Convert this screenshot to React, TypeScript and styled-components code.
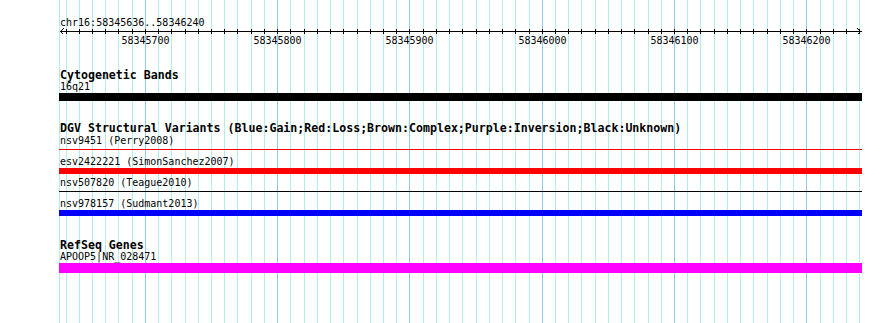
import styled, { createGlobalStyle } from "styled-components"

const START = 58345636
const END = 58346240
const FIRST_TICK = 58345640
const MINOR = "#b2ecf0"
const MAJOR = "#8ecbea"
const PANEL_LEFT = 59
const PANEL_WIDTH = 803

// pixel column of every 10bp grid line
const ticks = Array.from({ length: 61 }, (_, k) => ({
    bp: FIRST_TICK + k * 10,
    x: Math.round(65.5 + 13.2286 * k),
}))

const gridLines = [{ x: PANEL_LEFT, major: false }, ...ticks.map(t => ({ x: t.x, major: t.bp % 100 === 0 }))]

const gridBackground = (() => {
    const stops: string[] = []
    let prev = 0
    for (const l of gridLines) {
        stops.push(`transparent ${prev}px ${l.x}px`)
        stops.push(`${l.major ? MAJOR : MINOR} ${l.x}px ${l.x + 1}px`)
        prev = l.x + 1
    }
    stops.push(`transparent ${prev}px`)
    return `linear-gradient(to right, ${stops.join(", ")})`
})()

const GlobalStyle = createGlobalStyle`
    html, body {
        margin: 0;
        padding: 0;
        background: #ffffff;
    }
    body {
        font-family: "DejaVu Sans Mono", "Liberation Mono", monospace;
        font-size: 10px;
        color: #000000;
    }
`

const Page = styled.div`
    width: 890px;
    height: 323px;
    overflow: hidden;
    box-sizing: border-box;
    padding: 17px 0 0 ${PANEL_LEFT}px;
    background: ${gridBackground};
    display: flex;
    flex-direction: column;
`

const Panel = styled.div`
    width: ${PANEL_WIDTH}px;
    display: flex;
    flex-direction: column;
`

const CoordLabel = styled.div`
    line-height: 11px;
    height: 11px;
    padding-left: 1px;
    white-space: pre;
`

const RulerSvg = styled.svg`
    display: block;
    width: ${PANEL_WIDTH}px;
    height: 19px;
    text {
        font-family: "DejaVu Sans Mono", "Liberation Mono", monospace;
        font-size: 10px;
        fill: #000000;
    }
`

const Track = styled.section<{ $gap: number }>`
    margin-top: ${p => p.$gap}px;
    display: flex;
    flex-direction: column;
`

const TrackTitle = styled.div`
    font-weight: bold;
    font-size: 11.6px;
    line-height: 12px;
    height: 12px;
    padding-left: 1px;
    white-space: pre;
`

const FeatureList = styled.div<{ $pad: number }>`
    display: flex;
    flex-direction: column;
    gap: 3px;
    padding-top: ${p => p.$pad}px;
`

const Feature = styled.div`
    display: flex;
    flex-direction: column;
`

const FeatureLabel = styled.div`
    line-height: 11px;
    height: 11px;
    padding-left: 1px;
    white-space: pre;
`

const Glyph = styled.div<{ $color: string; $kind: "bar" | "line"; $h: number }>`
    height: ${p => p.$h}px;
    margin-top: 1px;
    background: ${p =>
        p.$kind === "bar"
            ? p.$color
            : `linear-gradient(${p.$color}, ${p.$color}) 0 2px / 100% 1px no-repeat`};
`

const toSvg = (x: number) => x - PANEL_LEFT + 0.5

function Ruler() {
    return (
        <RulerSvg viewBox={`0 0 ${PANEL_WIDTH} 19`} shapeRendering="crispEdges">
            <line x1={1} y1={3.5} x2={PANEL_WIDTH} y2={3.5} stroke="#000" />
            <polyline points="4.5,0.5 1.5,3.5 4.5,6.5" fill="none" stroke="#000" />
            <polyline points={`${PANEL_WIDTH - 4.5},0.5 ${PANEL_WIDTH - 1.5},3.5 ${PANEL_WIDTH - 4.5},6.5`} fill="none" stroke="#000" />
            {ticks.map(t => (
                <line key={t.bp} x1={toSvg(t.x)} y1={1} x2={toSvg(t.x)} y2={6} stroke="#000" />
            ))}
            {ticks.filter(t => t.bp % 100 === 0).map(t => (
                <text key={t.bp} x={toSvg(t.x)} y={16} textAnchor="middle">{t.bp}</text>
            ))}
        </RulerSvg>
    )
}

interface iFeature {
    label: string
    color: string
    kind: "bar" | "line"
    h: number
}

interface iTrack {
    title: string
    gap: number
    pad: number
    features: iFeature[]
}

const tracks: iTrack[] = [
    {
        title: "Cytogenetic Bands",
        gap: 22,
        pad: 0,
        features: [{ label: "16q21", color: "#000000", kind: "bar", h: 8 }],
    },
    {
        title: "DGV Structural Variants (Blue:Gain;Red:Loss;Brown:Complex;Purple:Inversion;Black:Unknown)",
        gap: 21,
        pad: 1,
        features: [
            { label: "nsv9451 (Perry2008)", color: "#ff0000", kind: "line", h: 6 },
            { label: "esv2422221 (SimonSanchez2007)", color: "#ff0000", kind: "bar", h: 6 },
            { label: "nsv507820 (Teague2010)", color: "#000000", kind: "line", h: 6 },
            { label: "nsv978157 (Sudmant2013)", color: "#0000ff", kind: "bar", h: 6 },
        ],
    },
    {
        title: "RefSeq Genes",
        gap: 23,
        pad: 0,
        features: [{ label: "APOOP5|NR_028471", color: "#ff00ff", kind: "bar", h: 10 }],
    },
]

export default function App() {
    return (
        <>
            <GlobalStyle />
            <Page>
                <Panel>
                    <CoordLabel>chr16:{START}..{END}</CoordLabel>
                    <Ruler />
                    {tracks.map(t => (
                        <Track key={t.title} $gap={t.gap}>
                            <TrackTitle>{t.title}</TrackTitle>
                            <FeatureList $pad={t.pad}>
                                {t.features.map(f => (
                                    <Feature key={f.label}>
                                        <FeatureLabel>{f.label}</FeatureLabel>
                                        <Glyph $color={f.color} $kind={f.kind} $h={f.h} />
                                    </Feature>
                                ))}
                            </FeatureList>
                        </Track>
                    ))}
                </Panel>
            </Page>
        </>
    )
}
